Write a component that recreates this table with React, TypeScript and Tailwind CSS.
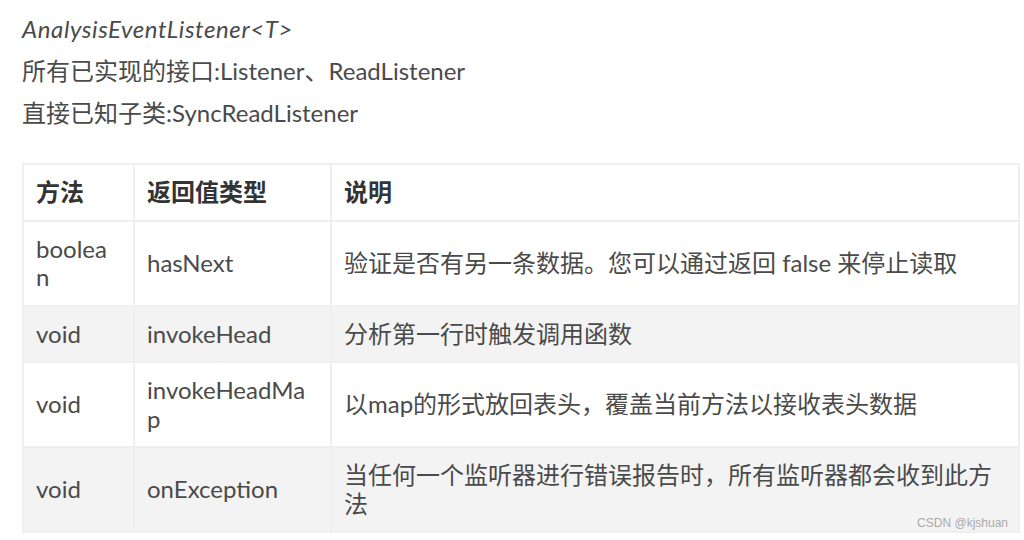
const rows = [
  { type: "boolean", name: "hasNext", desc: "验证是否有另一条数据。您可以通过返回 false 来停止读取" },
  { type: "void", name: "invokeHead", desc: "分析第一行时触发调用函数" },
  { type: "void", name: "invokeHeadMap", desc: "以map的形式放回表头，覆盖当前方法以接收表头数据" },
  { type: "void", name: "onException", desc: "当任何一个监听器进行错误报告时，所有监听器都会收到此方法" },
];

export default function App() {
  return (
    <div className="relative w-[1024px] h-[540px] overflow-hidden bg-white font-['Lato','Noto_Sans_CJK_SC',sans-serif] text-[#4a4a4a]">
      {/* class summary */}
      <div className="pl-[22px] pt-[8px] text-[24px] leading-[42px]">
        <p className="italic tracking-[0.6px]">AnalysisEventListener&lt;T&gt;</p>
        <p>所有已实现的接口:Listener、ReadListener</p>
        <p>直接已知子类:SyncReadListener</p>
      </div>

      {/* method table */}
      <table className="ml-[22px] mt-[29px] w-[998px] table-fixed border-collapse text-[24px] leading-[28.5px]">
        <colgroup>
          <col className="w-[111px]" />
          <col className="w-[197px]" />
          <col />
        </colgroup>
        <thead>
          <tr className="bg-white">
            <th className="border-2 border-[#efefef] pl-[12px] pr-[18px] py-[13px] text-left font-bold text-[#333]">方法</th>
            <th className="border-2 border-[#efefef] px-[12px] py-[13px] text-left font-bold text-[#333]">返回值类型</th>
            <th className="border-2 border-[#efefef] px-[12px] py-[13px] text-left font-bold text-[#333]">说明</th>
          </tr>
        </thead>
        <tbody>
          {rows.map((r, i) => (
            <tr key={r.name} className={i % 2 === 1 ? "bg-[#f3f3f3]" : "bg-white"}>
              <td className="border-2 border-[#efefef] pl-[12px] pr-[18px] py-[13px] break-all">{r.type}</td>
              <td className="border-2 border-[#efefef] px-[12px] py-[13px] break-all">{r.name}</td>
              <td className="border-2 border-[#efefef] px-[12px] py-[13px]">{r.desc}</td>
            </tr>
          ))}
        </tbody>
      </table>

      {/* watermark */}
      <span className="absolute right-[16px] bottom-[11px] font-['Liberation_Sans',sans-serif] text-[12px] leading-none text-[#aaaaaa]">
        CSDN @kjshuan
      </span>
    </div>
  );
}
